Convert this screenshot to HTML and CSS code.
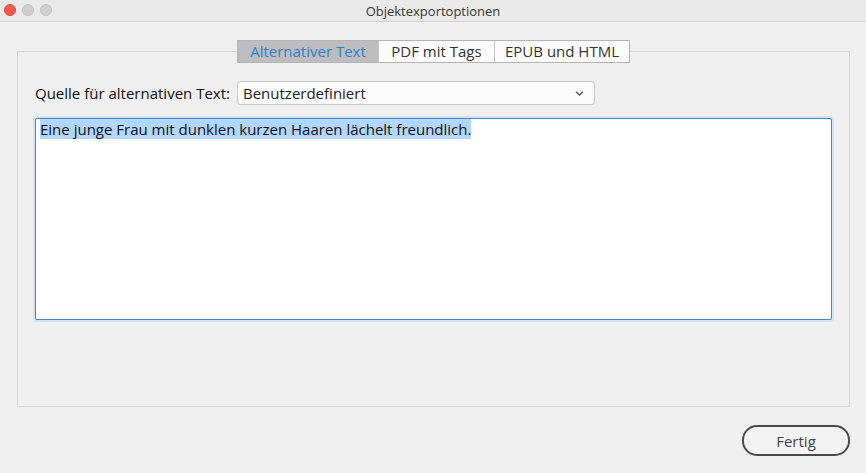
FILE: index.html
```html
<!DOCTYPE html>
<html lang="de">
<head>
    <meta charset="UTF-8">
    <title>Objektexportoptionen</title>
    <link rel="stylesheet" href="styles.css">
</head>
<body>
    <div class="window">
        <div class="titlebar">
            <div class="lights">
                <span class="light close"></span>
                <span class="light"></span>
                <span class="light"></span>
            </div>
            <div class="title">Objektexportoptionen</div>
        </div>

        <div class="content">
            <div class="group">
                <div class="tabs">
                    <div class="tab active">Alternativer Text</div>
                    <div class="tab">PDF mit Tags</div>
                    <div class="tab">EPUB und HTML</div>
                </div>

                <div class="source-row">
                    <label class="source-label">Quelle für alternativen Text:</label>
                    <div class="select">
                        <span>Benutzerdefiniert</span>
                        <svg class="chevron" width="9" height="5" viewBox="0 0 9 5">
                            <path d="M1 0.8 L4.5 4 L8 0.8" fill="none" stroke="#555" stroke-width="1.3"/>
                        </svg>
                    </div>
                </div>

                <div class="textbox">
                    <span class="selected">Eine junge Frau mit dunklen kurzen Haaren lächelt freundlich.</span>
                </div>
            </div>

            <div class="actions">
                <button class="done-btn">Fertig</button>
            </div>
        </div>
    </div>
</body>
</html>
```

FILE: styles.css
```css
/* Dialog window */
body, html {
    margin: 0;
    padding: 0;
    width: 100%;
    height: 100%;
    font-family: 'Open Sans', 'Noto Sans', sans-serif;
    background: #efefef;
    color: #222;
}

.window {
    display: flex;
    flex-direction: column;
    height: 100%;
}

/* Title bar with traffic lights */
.titlebar {
    position: relative;
    height: 21px;
    background: #e8e9e8;
    border-bottom: 1px solid #d2d2d2;
    display: flex;
    align-items: center;
    justify-content: center;
}

.lights {
    position: absolute;
    left: 4px;
    top: 4px;
    display: flex;
    gap: 6px;
}

.light {
    width: 12px;
    height: 12px;
    border-radius: 50%;
    background: #cfcfcf;
    border: 0.5px solid #c2c2c2;
    box-sizing: border-box;
}

.light.close {
    background: #f25a53;
    border-color: #e0443e;
}

.title {
    font-size: 13px;
    color: #3a3a3a;
}

.content {
    flex: 1;
    display: flex;
    flex-direction: column;
    padding: 29px 16px 0 17px;
}

/* Group box */
.group {
    position: relative;
    height: 356px;
    border: 1px solid #d6d6d6;
    box-sizing: border-box;
    padding: 29px 17px 0 17px;
}

.tabs {
    position: absolute;
    top: -12px;
    left: 219px;
    display: flex;
    border: 1px solid #b4b4b4;
    background: #fbfbfb;
}

.tab {
    height: 21px;
    line-height: 21px;
    font-size: 15px;
    color: #333;
    text-align: center;
    border-left: 1px solid #c6c6c6;
}

.tab:first-child {
    border-left: none;
    width: 140px;
}

.tab:nth-child(2) {
    width: 115px;
}

.tab:nth-child(3) {
    width: 134px;
}

.tab.active {
    background: #bdbdbd;
    color: #2d7fd0;
}

/* Source dropdown */
.source-row {
    display: flex;
    align-items: center;
    gap: 6px;
}

.source-label {
    font-size: 15px;
    color: #111;
    width: 196px;
}

.select {
    width: 358px;
    height: 24px;
    box-sizing: border-box;
    background: #fbfbfb;
    border: 1px solid #c9c9c9;
    border-radius: 3px;
    display: flex;
    align-items: center;
    justify-content: space-between;
    padding: 0 10px 0 5px;
    font-size: 15px;
    color: #222;
}

/* Text area */
.textbox {
    margin-top: 13px;
    height: 202px;
    box-sizing: border-box;
    background: #fff;
    border: 1px solid #4a82bf;
    border-radius: 2px;
    box-shadow: 0 0 0 2px #d4e3f3;
    padding: 2px 4px;
    font-size: 15px;
    line-height: 17px;
    color: #111;
}

.selected {
    background: #b3d6fb;
}

/* Footer button */
.actions {
    display: flex;
    justify-content: flex-end;
    padding-top: 18px;
}

.done-btn {
    width: 108px;
    height: 31px;
    border: 2px solid #4a4a4a;
    border-radius: 15px;
    background: #f3f3f3;
    font-family: inherit;
    font-size: 15px;
    color: #444;
}
```
